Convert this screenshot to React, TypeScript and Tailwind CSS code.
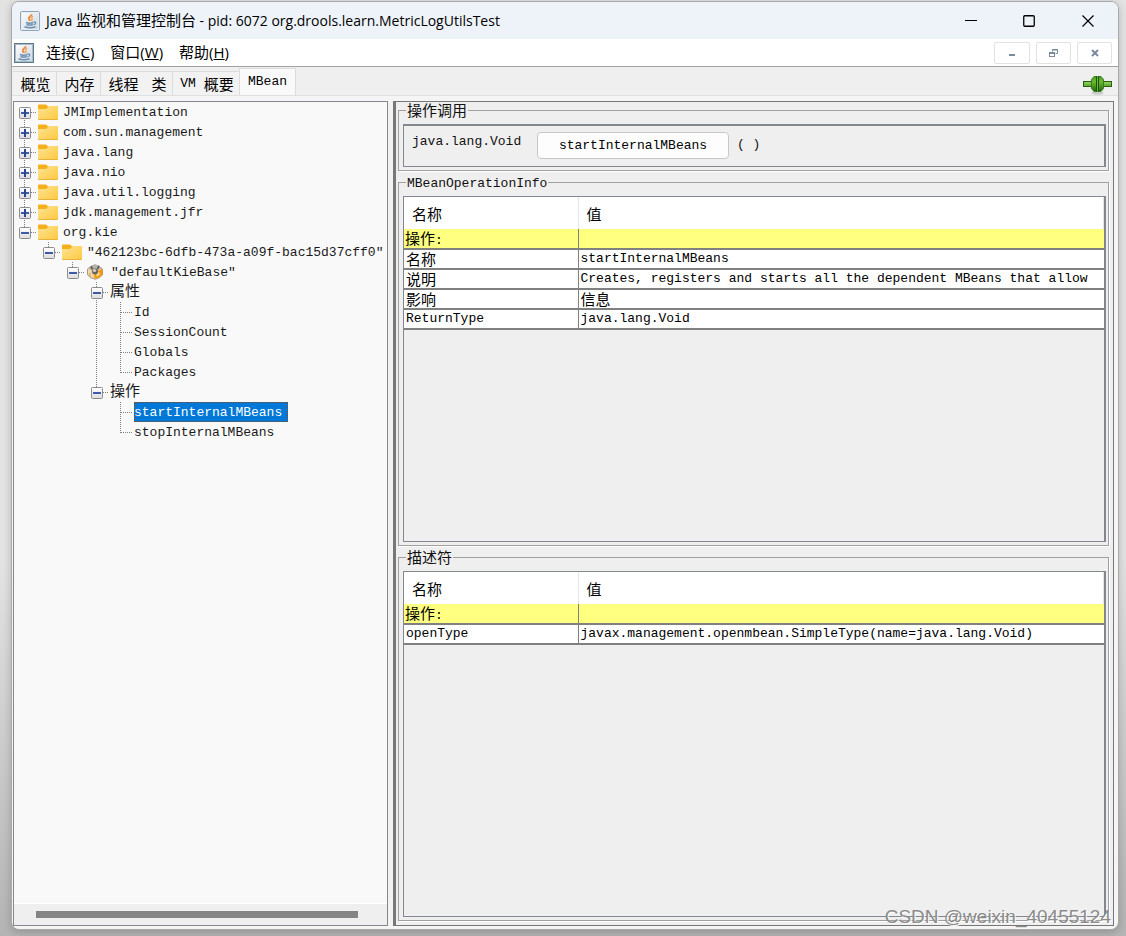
import React from "react";

const MONO = "font-['Liberation_Mono','Noto_Sans_CJK_SC',monospace] text-[13px]";
const CJK = "font-['Noto_Sans_CJK_SC',sans-serif] text-[15px] leading-none";
const UI = "font-['Open_Sans','Noto_Sans_CJK_SC',sans-serif]";

const Cn = ({ children }: { children: React.ReactNode }) => <span className={CJK}>{children}</span>;

function JavaIcon({ dark = false }: { dark?: boolean }) {
  return (
    <svg width="20" height="20" viewBox="0 0 20 20" className="shrink-0" aria-hidden="true">
      <defs>
        <linearGradient id="java-bg" x1="0" y1="0" x2="1" y2="1">
          <stop offset="0" stopColor="#ffffff" />
          <stop offset="1" stopColor="#c9d7e3" />
        </linearGradient>
      </defs>
      <rect x="0.5" y="0.5" width="19" height="19" rx={dark ? 0 : 1.5} fill="url(#java-bg)" stroke={dark ? "#5f788e" : "#93a5b5"} />
      <rect x="1.5" y="1.5" width="17" height="17" fill="none" stroke={dark ? "#a9bccb" : "#e6edf3"} />
      <path d="M11.5 3.300c.5 2-3.500 2.600-2.600 4.500.3.8 1 1.200 1 2.200" fill="none" stroke="#ef8a3a" strokeWidth="2" />
      <path d="M13.200 5.300c-2.200 1.100-1.800 1.800-1.100 2.700.4.8 0 1.400-.7 2" fill="none" stroke="#f3a566" strokeWidth="1.400" />
      <path d="M6 11.500c2 .8 5 .8 7.500 0M6.500 13.500c2 .7 4.300.7 6.300 0M4.500 15.800c3 1 8 1 11 0" fill="none" stroke="#6f90ae" strokeWidth="1.500" />
      <path d="M13.500 11c3-.6 2.900 2.200 0 2.700" fill="none" stroke="#6f90ae" strokeWidth="1.200" />
    </svg>
  );
}

function FolderIcon() {
  return (
    <svg width="20" height="16" viewBox="0 0 20 16" className="shrink-0" aria-hidden="true">
      <defs>
        <linearGradient id="folder-bg" x1="0" y1="0" x2="1" y2="1">
          <stop offset="0" stopColor="#ffe494" />
          <stop offset="1" stopColor="#fcc940" />
        </linearGradient>
      </defs>
      <path d="M0 1.500Q0 .5 1 .5h6.500q.8 0 1.500 1L9.700 2H19q1 0 1 1v5H0z" fill="#f5b01b" />
      <path d="M0 5h7.500q.7 0 1.400-.7l.9-1.300Q10.200 2 11 2h8q1 0 1 1v12q0 1-1 1H1q-1 0-1-1z" fill="url(#folder-bg)" />
      <path d="M0.500 15.500h19" stroke="#e9b23a" />
    </svg>
  );
}

function BeanIcon() {
  return (
    <svg width="18" height="16" viewBox="0 0 18 16" className="shrink-0" aria-hidden="true">
      <path d="M4.500 2.500 9 .8l4.500 1.500 3 3v5.700l-3 2.500-4 1.700-5-1.500-3-3V5z" fill="#f3d8a6" stroke="#8a847c" strokeWidth=".8" />
      <path d="M8 9.500 16.300 4.500v6.300l-3 2.700L8.500 15z" fill="#f79a0c" />
      <path d="M10.500 9.500 13.500 8v3l-3 1.500z" fill="#f8dca8" />
      <path d="M2.500 4.500 9 9 15.500 4 9 .8z" fill="#b9b3aa" />
      <path d="M5 2.500 6.500 5M13 2l-1.500 3" stroke="#55514d" strokeWidth="1.600" />
      <circle cx="9" cy="7.500" r="3" fill="#6a6662" />
      <circle cx="8.500" cy="6.500" r="1.600" fill="#d9d5cd" />
      <path d="M4 9v3.500" stroke="#c9a76c" strokeWidth="1.200" />
    </svg>
  );
}

type LineProps = { up?: boolean; down?: boolean; right?: boolean; box?: "+" | "-" };

/* One 24px column of the tree: dotted connectors and, if given, the expander box. */
function Branch({ up, down, right, box }: LineProps) {
  return (
    <svg width="24" height="20" viewBox="0 0 24 20" className="block shrink-0" aria-hidden="true">
      <defs>
        <linearGradient id="box-bg" x1="0" y1="0" x2="0" y2="1">
          <stop offset="0" stopColor="#ffffff" />
          <stop offset="1" stopColor="#dcdcdc" />
        </linearGradient>
      </defs>
      <g stroke="#808080" strokeDasharray="1 1" fill="none">
        {up && <path d="M10.500 0V11" />}
        {down && <path d="M10.500 10V20" />}
        {right && <path d="M11 10.500H22" />}
      </g>
      {box && (
        <>
          <rect x="5.500" y="5.500" width="11" height="11" rx="1" fill="url(#box-bg)" stroke="#8c8c8c" />
          <rect x="7" y="10" width="8" height="2" fill="#3f5aa8" />
          {box === "+" && <rect x="10" y="7" width="2" height="8" fill="#2c4590" />}
        </>
      )}
    </svg>
  );
}

type Node = { label: string; cn?: boolean; icon?: "folder" | "bean"; cols: LineProps[]; selected?: boolean };

const leaf = (label: string, inner: boolean, last = false, selected = false): Node => ({
  label,
  selected,
  cols: [{}, {}, {}, inner ? { up: true, down: true } : {}, { up: true, down: !last, right: true }],
});

const nodes: Node[] = [
  { label: "JMImplementation", icon: "folder", cols: [{ down: true, right: true, box: "+" }] },
  ...["com.sun.management", "java.lang", "java.nio", "java.util.logging", "jdk.management.jfr"].map(
    (label): Node => ({ label, icon: "folder", cols: [{ up: true, down: true, right: true, box: "+" }] })
  ),
  { label: "org.kie", icon: "folder", cols: [{ up: true, right: true, box: "-" }] },
  { label: '"462123bc-6dfb-473a-a09f-bac15d37cff0"', icon: "folder", cols: [{}, { up: true, right: true, box: "-" }] },
  { label: '"defaultKieBase"', icon: "bean", cols: [{}, {}, { up: true, right: true, box: "-" }] },
  { label: "属性", cn: true, cols: [{}, {}, {}, { up: true, down: true, right: true, box: "-" }] },
  leaf("Id", true),
  leaf("SessionCount", true),
  leaf("Globals", true),
  leaf("Packages", true, true),
  { label: "操作", cn: true, cols: [{}, {}, {}, { up: true, right: true, box: "-" }] },
  leaf("startInternalMBeans", false, false, true),
  leaf("stopInternalMBeans", false, true),
];

function TreeRow({ node }: { node: Node }) {
  const text = node.selected
    ? "bg-[#0078d7] text-white outline-1 -outline-offset-1 outline-dotted outline-[#8a4a1c] pr-1.5"
    : "text-[#1a1a1a]";
  return (
    <li role="treeitem" aria-level={node.cols.length} aria-selected={!!node.selected} className="flex h-5 items-center">
      {node.cols.map((c, i) =>
        c.box ? (
          <button key={i} aria-label={`${c.box} ${node.label}`} className="shrink-0">
            <Branch {...c} />
          </button>
        ) : (
          <Branch key={i} {...c} />
        )
      )}
      {node.icon && (
        <span className="flex w-[25px] shrink-0">{node.icon === "folder" ? <FolderIcon /> : <BeanIcon />}</span>
      )}
      <span className={`h-5 whitespace-nowrap ${node.cn ? "leading-[18px]" : "leading-[22px]"} ${text}`}>
        {node.cn ? <Cn>{node.label}</Cn> : node.label}
      </span>
    </li>
  );
}

function Group({ title, cn, grow, children }: { title: string; cn?: boolean; grow?: boolean; children: React.ReactNode }) {
  return (
    <fieldset
      className={`flex min-w-0 flex-col border border-[#a0a0a0] pt-[5px] pr-0.5 pb-[3px] pl-1 shadow-[1px_1px_0_#fff] ${grow ? "flex-1" : ""}`}
    >
      <legend className={`ml-[3px] h-[17px] px-px whitespace-nowrap ${cn ? "leading-4" : "leading-5"}`}>
        {cn ? <Cn>{title}</Cn> : title}
      </legend>
      {children}
    </fieldset>
  );
}

type Cell = { t: string; cn?: boolean };

const CN_CELL = "font-['Noto_Sans_CJK_SC',sans-serif] text-[15px] leading-4";

function InfoTable({ label, rows }: { label: string; rows: [Cell, Cell][] }) {
  return (
    <div className="flex-1 overflow-hidden border border-r-2 border-[#828790] bg-[#efefef]">
      <table aria-label={label} className="w-full table-fixed border-collapse">
        <colgroup>
          <col className="w-[174px]" />
          <col />
        </colgroup>
        <thead>
          <tr className="h-8 bg-white text-left text-black">
            <th className={`border-r border-[#e5e5e5] p-0 pt-0.5 pl-2 font-normal ${CN_CELL}`}>名称</th>
            <th className={`border-r border-[#e5e5e5] p-0 pt-0.5 pl-2 font-normal ${CN_CELL}`}>值</th>
          </tr>
        </thead>
        <tbody>
          <tr className="h-5 bg-[#ffff80] text-black">
            <td className={`border-r border-b-2 border-[#808080] p-0 pl-px ${CN_CELL}`}>
              操作<span className="font-['Liberation_Mono',monospace] text-[13px] leading-none">:</span>
            </td>
            <td className="border-b-2 border-[#808080] p-0" />
          </tr>
          {rows.map(([a, b], i) => (
            <tr key={i} className="h-5 bg-white text-black">
              <td className={`border-r border-b-2 border-[#808080] p-0 pl-0.5 ${a.cn ? CN_CELL : "leading-4"}`}>{a.t}</td>
              <td className={`border-b-2 border-[#808080] p-0 pl-0.5 whitespace-nowrap ${b.cn ? CN_CELL : "leading-4"}`}>{b.t}</td>
            </tr>
          ))}
        </tbody>
      </table>
    </div>
  );
}

function Plug() {
  return (
    <svg width="29" height="20" viewBox="0 0 29 20" aria-hidden="true">
      <defs>
        <linearGradient id="plug" x1="0" y1="0" x2="0" y2="1">
          <stop offset="0" stopColor="#4a9c1e" />
          <stop offset=".35" stopColor="#6cbb30" />
          <stop offset="1" stopColor="#1f6a08" />
        </linearGradient>
      </defs>
      <ellipse cx="14.500" cy="18" rx="6" ry="1.800" fill="#000" opacity=".15" />
      <rect x=".5" y="6.500" width="28" height="5" fill="#69b637" stroke="#24600d" />
      <path d="M1.500 8H28" stroke="#a4d97a" />
      <path d="M11 1.500h7l2.500 3v9L18 16.500h-7L8.500 13.500v-9z" fill="url(#plug)" stroke="#3b7a22" />
      <path d="M13.500 1.500v15M15.500 1.500v15" stroke="#1d5208" />
      <path d="M14.500 1.500v15" stroke="#6dbb3a" />
    </svg>
  );
}

const tabs = [
  { id: "overview", body: <Cn>概览</Cn>, cls: "w-[44px]" },
  { id: "memory", body: <Cn>内存</Cn>, cls: "w-[44px]" },
  { id: "threads", body: <Cn>线程</Cn>, cls: "w-[43px] border-r-0" },
  { id: "classes", body: <Cn>类</Cn>, cls: "w-[29px]" },
  { id: "vm", body: <span className="flex items-center gap-2">VM <Cn>概要</Cn></span>, cls: "w-[66px] border-r-0" },
];

const menus = [
  { label: "连接", key: "C" },
  { label: "窗口", key: "W" },
  { label: "帮助", key: "H" },
];

export default function App() {
  return (
    <div className={`relative flex min-h-screen bg-linear-to-b from-[#e3e3e3] from-60% to-[#b4b4b4] pt-px pr-[7px] pb-[6px] pl-[11px] text-[#111] ${MONO}`}>
      <div className="flex min-w-0 flex-1 flex-col overflow-hidden rounded-lg border border-[#a9a9a9] bg-[#f5f5f5] shadow-[0_2px_8px_rgba(0,0,0,0.2)]">
        <header className={`flex h-[37px] shrink-0 items-center bg-[#eef3fa] pl-2 text-[14px] text-black ${UI}`}>
          <JavaIcon />
          <h1 className="ml-1.5 flex-1 leading-5 whitespace-nowrap">
            Java <span className="text-[15px]">监视和管理控制台</span> - pid: 6072 org.drools.learn.MetricLogUtilsTest
          </h1>
          <button aria-label="最小化" className="flex h-full w-[58px] items-center justify-center">
            <svg width="12" height="12"><path d="M0 5.500h12" stroke="#000" /></svg>
          </button>
          <button aria-label="最大化" className="flex h-full w-[58px] items-center justify-center">
            <svg width="12" height="12"><rect x=".75" y=".75" width="10.500" height="10.500" rx="1" fill="none" stroke="#000" strokeWidth="1.300" /></svg>
          </button>
          <button aria-label="关闭" className="flex h-full w-[60px] items-center justify-center">
            <svg width="12" height="12"><path d="M.5.5l11 11M11.500.5l-11 11" stroke="#000" strokeWidth="1.200" /></svg>
          </button>
        </header>

        <nav className={`flex h-[28px] shrink-0 items-center border-b border-[#a0a0a0] bg-white pr-1.5 pl-[2px] text-[15px] leading-5 text-black ${UI}`}>
          <JavaIcon dark />
          <div className="ml-3 flex gap-4 pb-0.5">
            {menus.map((m) => (
              <button key={m.key}>{m.label}(<u>{m.key}</u>)</button>
            ))}
          </div>
          <div className="ml-auto flex gap-[6px]">
            <button aria-label="最小化子窗口" className="flex h-[22px] w-9 items-center justify-center rounded-xs border border-[#e2e2e2]">
              <svg width="8" height="8"><rect x="1" y="5" width="6" height="2" fill="#7b8a9c" /></svg>
            </button>
            <button aria-label="还原子窗口" className="flex h-[22px] w-[35px] items-center justify-center rounded-xs border border-[#e2e2e2]">
              <svg width="9" height="8"><path d="M3.500 2.500v-2h5v4H6.500M3 1h6" fill="none" stroke="#7b8a9c" /><rect x=".5" y="3.500" width="5" height="4" fill="#fff" stroke="#7b8a9c" /><path d="M0 4h6" stroke="#7b8a9c" strokeWidth="2" /></svg>
            </button>
            <button aria-label="关闭子窗口" className="flex h-[22px] w-[35px] items-center justify-center rounded-xs border border-[#e2e2e2]">
              <svg width="8" height="8"><path d="M1 1l6 6M7 1l-6 6" stroke="#7b8a9c" strokeWidth="2" /></svg>
            </button>
          </div>
        </nav>

        <div className="flex h-[29px] shrink-0 items-end border-b border-[#e0e0e0] bg-[#efefef] pr-1.5 pl-px">
          <div role="tablist" className="flex items-end text-black">
            {tabs.map((t) => (
              <button key={t.id} role="tab" aria-selected={false} className={`flex h-6 items-center justify-center border-t border-r border-[#dcdcdc] bg-[#f2f2f2] pl-0.5 leading-6 ${t.cls}`}>
                {t.body}
              </button>
            ))}
            <button role="tab" aria-selected={true} className="h-[27px] w-[57px] border border-b-0 border-[#dcdcdc] bg-[#f9f9f9] leading-[26px]">
              MBean
            </button>
          </div>
          <div className="ml-auto"><Plug /></div>
        </div>

        <main className="flex min-h-0 flex-1 pt-[5px] pr-1 pb-[3px] pl-px">
          <section className="flex w-[375px] shrink-0 flex-col overflow-hidden border border-[#828790] bg-[#f9f9f9]">
            <ul role="tree" aria-label="MBean" className="flex-1 overflow-hidden">
              {nodes.map((n) => (
                <TreeRow key={n.label} node={n} />
              ))}
            </ul>
            <div className="flex h-[22px] items-center border-t border-white bg-[#efefef] pl-[22px]">
              <div className="h-[7px] w-[322px] bg-[#858585]" />
            </div>
          </section>
          <div className="w-[5px] shrink-0 bg-[#f2f2f2]" />
          <section className="flex min-w-0 flex-1 flex-col gap-[3px] border border-l-[3px] border-[#777] bg-[#efefef] pr-1 pb-1 pl-0.5">
            <Group title="操作调用" cn>
              <div className="flex h-[43px] border border-t-2 border-r-2 border-[#828790] pt-1.5 pl-2">
                <span className="w-[125px] leading-[20px]">java.lang.Void</span>
                <button className="h-[27px] w-[192px] rounded-sm border border-[#c8c8c8] bg-[#fdfdfd] text-black">startInternalMBeans</button>
                <span className="ml-2 leading-[26px]">( )</span>
              </div>
            </Group>
            <Group title="MBeanOperationInfo" grow>
              <InfoTable
                label="MBeanOperationInfo"
                rows={[
                  [{ t: "名称", cn: true }, { t: "startInternalMBeans" }],
                  [{ t: "说明", cn: true }, { t: "Creates, registers and starts all the dependent MBeans that allow" }],
                  [{ t: "影响", cn: true }, { t: "信息", cn: true }],
                  [{ t: "ReturnType" }, { t: "java.lang.Void" }],
                ]}
              />
            </Group>
            <Group title="描述符" cn grow>
              <InfoTable
                label="描述符"
                rows={[[{ t: "openType" }, { t: "javax.management.openmbean.SimpleType(name=java.lang.Void)" }]]}
              />
            </Group>
          </section>
        </main>
      </div>
      <div className="pointer-events-none absolute right-[15px] bottom-[7px] font-['Liberation_Sans',sans-serif] text-[19px] leading-6 text-[#8b8b8b] [text-shadow:1px_1px_0_#fff]">
        CSDN @weixin_40455124
      </div>
    </div>
  );
}
